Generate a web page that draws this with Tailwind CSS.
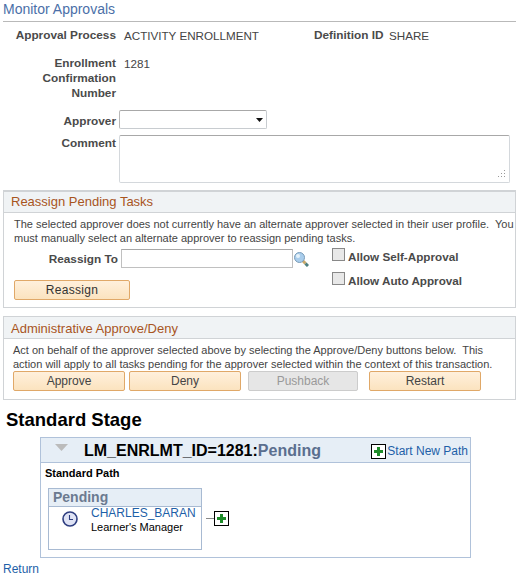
<!DOCTYPE html>
<html><head><meta charset="utf-8">
<script src="https://cdn.jsdelivr.net/npm/@tailwindcss/browser@4"></script>
</head>
<body class="bg-white font-['Liberation_Sans',Arial,sans-serif] text-[11px] text-[#444] overflow-hidden">
<div class="w-[519px] h-[576px] overflow-hidden">
  <div class="h-[22px] border-b border-[#b9b9b9] mx-[3px] text-[14px] leading-[18px] text-[#4b6fa8]">Monitor Approvals</div>

  <div class="flex h-[29px] pt-[6px] leading-[15px]">
    <div class="w-[116px] text-right font-bold text-[11.8px] text-[#4a4a4a] whitespace-nowrap">Approval Process</div>
    <div class="ml-2 w-[190px] text-[11.65px] whitespace-nowrap">ACTIVITY ENROLLMENT</div>
    <div class="w-[67px] text-right font-bold text-[11.8px] text-[#4a4a4a] whitespace-nowrap">Definition ID</div>
    <div class="ml-2 text-[11.65px]">SHARE</div>
  </div>
  <div class="flex leading-[15px] pt-[5px]">
    <div class="w-[116px] text-right font-bold text-[11.8px] text-[#4a4a4a]">Enrollment<br>Confirmation<br>Number</div>
    <div class="ml-2 text-[11.65px]">1281</div>
  </div>

  <div class="flex mt-[9px] h-[19px]">
    <div class="w-[116px] text-right font-bold text-[11.8px] text-[#4a4a4a] leading-[22px]">Approver</div>
    <div class="ml-[3px] w-[148px] h-[19px] border border-[#c8ccd0] border-t-[#a8a8a8] border-l-[#b8b8b8] rounded-[2px] bg-white flex items-center justify-end pr-[3px]">
      <svg width="7" height="4" viewBox="0 0 7 4"><path d="M0 0h7L3.5 4z" fill="#111"/></svg>
    </div>
  </div>
  <div class="flex mt-[6px] h-[48px]">
    <div class="w-[116px] text-right font-bold text-[11.8px] text-[#4a4a4a] leading-[17px]">Comment</div>
    <div class="ml-[3px] w-[391px] h-[48px] border border-[#d4d8dc] border-t-[#a8a8a8] rounded-[2px] relative">
      <svg class="absolute right-[4px] bottom-[4px]" width="8" height="8" viewBox="0 0 8 8"><path d="M7 0h1v1H7zM7 3h1v1H7zM4 3h1v1H4zM7 6h1v1H7zM4 6h1v1H4zM1 6h1v1H1z" fill="#999"/></svg>
    </div>
  </div>

  <div class="mx-[3px] mt-[7px] h-[118px] border border-[#d0d3d6] border-t-2">
    <div class="h-[21px] bg-[#f0f3f5] border-b border-[#d0d3d6] text-[13px] leading-[20px] pl-[7px] text-[#a8551e]">Reassign Pending Tasks</div>
    <div class="pl-[10px] pt-[4px] leading-[14px] whitespace-pre">The selected approver does not currently have an alternate approver selected in their user profile.  You
must manually select an alternate approver to reassign pending tasks.</div>
    <div class="flex">
      <div class="w-[400px]">
        <div class="flex mt-[4px] h-[19px]">
          <div class="w-[114px] text-right font-bold text-[11.8px] text-[#4a4a4a] leading-[21px]">Reassign To</div>
          <div class="ml-[3px] w-[172px] h-[19px] border border-[#c0c0c0] border-t-[#a8a8a8]"></div>
          <svg class="ml-[1px] mt-[3px]" width="15" height="15" viewBox="0 0 15 15"><path d="M9 9l2.5 2.5" stroke="#c9a86a" stroke-width="3"/><path d="M11.5 11.5l2.5 2.5" stroke="#4f7f7f" stroke-width="3"/><circle cx="5.5" cy="5.5" r="5" fill="#a9cdec" stroke="#7a9cb8"/><circle cx="4" cy="4" r="2" fill="#e6f2fb"/></svg>
        </div>
        <div class="mt-[12px] ml-[10px] w-[116px] h-[20px] rounded-[2px] border border-[#e0a868] bg-gradient-to-b from-[#fff0dc] to-[#fbe3bf] text-center text-[12px] leading-[18px] text-[#333] tracking-[0.3px]">Reassign</div>
      </div>
      <div class="ml-[-72px]">
        <div class="flex items-start mt-[4px] h-[24px]">
          <div class="mt-[-1px] w-[13px] h-[13px] border border-[#888] bg-[#e8e8e8]"></div>
          <span class="ml-[3px] font-bold text-[11.7px] text-[#4a4a4a] leading-[15px]">Allow Self-Approval</span>
        </div>
        <div class="flex items-start h-[24px]">
          <div class="mt-[-1px] w-[13px] h-[13px] border border-[#888] bg-[#e8e8e8]"></div>
          <span class="ml-[3px] font-bold text-[11.7px] text-[#4a4a4a] leading-[15px]">Allow Auto Approval</span>
        </div>
      </div>
    </div>
  </div>

  <div class="mx-[3px] mt-[8px] h-[84px] border border-[#d0d3d6]">
    <div class="h-[22px] bg-[#f0f3f5] border-b border-[#d0d3d6] text-[13px] pt-[1px] leading-[21px] pl-[7px] text-[#a8551e]">Administrative Approve/Deny</div>
    <div class="pl-[9px] pt-[4px] leading-[14px] whitespace-pre">Act on behalf of the approver selected above by selecting the Approve/Deny buttons below.  This
action will apply to all tasks pending for the approver selected within the context of this transaction.</div>
    <div class="flex pl-[9px]">
      <div class="w-[112px] h-[20px] rounded-[2px] border border-[#e0a868] bg-gradient-to-b from-[#fff0dc] to-[#fbe3bf] text-center text-[12px] leading-[18px]">Approve</div>
      <div class="ml-[4px] w-[112px] h-[20px] rounded-[2px] border border-[#e0a868] bg-gradient-to-b from-[#fff0dc] to-[#fbe3bf] text-center text-[12px] leading-[18px]">Deny</div>
      <div class="ml-[7px] w-[110px] h-[20px] rounded-[2px] border border-[#ccc] bg-[#e6e6e6] text-center text-[12px] leading-[18px] text-[#999]">Pushback</div>
      <div class="ml-[11px] w-[112px] h-[20px] rounded-[2px] border border-[#e0a868] bg-gradient-to-b from-[#fff0dc] to-[#fbe3bf] text-center text-[12px] leading-[18px]">Restart</div>
    </div>
  </div>

  <div class="ml-[6px] mt-[9px] h-[21px] text-[18.5px] leading-[21px] font-bold text-black">Standard Stage</div>

  <div class="ml-[40px] mt-[7px] w-[431px] h-[121px] border border-[#b0c2da]">
    <div class="h-[25px] bg-[#e6eef6] border-b border-[#b0c2da] flex items-center relative">
      <svg class="ml-[14px] mb-[5px]" width="13" height="7" viewBox="0 0 13 7"><path d="M0 0h13L6.5 7z" fill="#bbb"/></svg>
      <span class="ml-[16px] mt-[2px] text-[16px] font-bold text-black">LM_ENRLMT_ID=1281:<span class="text-[#5b6f8f]">Pending</span></span>
      <div class="ml-auto mr-[2px] mt-[2px] flex items-center">
        <svg width="15" height="15" viewBox="0 0 15 15"><rect x=".5" y=".5" width="14" height="14" fill="#fff" stroke="#000"/><path d="M6 3h3v3h3v3H9v3H6V9H3V6h3z" fill="#1f8c2a"/></svg>
        <span class="ml-[1px] text-[12px] text-[#1d5fa8]">Start New Path</span>
      </div>
    </div>
    <div class="pl-[4px] pt-[3px] h-[18px] text-[11px] font-bold text-black leading-[14px]">Standard Path</div>
    <div class="flex ml-[7px] mt-[7px]">
      <div class="w-[154px] h-[62px] border border-[#a8bad2]">
        <div class="h-[18px] bg-[#e6eef6] border-b border-[#a8bad2] text-[14px] leading-[17px] font-bold text-[#6b7a90] pl-[4px]">Pending</div>
        <div class="flex">
          <svg class="ml-[12px] mt-[3px]" width="18" height="18" viewBox="0 0 18 18"><circle cx="9" cy="9" r="7" fill="#dfe3f5" stroke="#2e3e80" stroke-width="1.6"/><path d="M8.5 5v4.5H12" fill="none" stroke="#2e3e80" stroke-width="1.1"/></svg>
          <div class="ml-[12px] mt-[-1px] leading-[14px]">
            <div class="text-[12px] text-[#1d5fa8]">CHARLES_BARAN</div>
            <div class="text-[11px] text-black leading-[15px]">Learner's Manager</div>
          </div>
        </div>
      </div>
      <div class="ml-[4px] mt-[22px] flex items-center self-start h-[16px]">
        <div class="w-[8px] h-px bg-[#888]"></div>
        <svg width="15" height="15" viewBox="0 0 15 15"><rect x=".5" y=".5" width="14" height="14" fill="#fff" stroke="#000"/><path d="M6 3h3v3h3v3H9v3H6V9H3V6h3z" fill="#1f8c2a"/></svg>
      </div>
    </div>
  </div>
  <div class="ml-[3px] mt-[3px] leading-[16px] text-[12px] text-[#1d5fa8]">Return</div>
</div>
</body></html>
